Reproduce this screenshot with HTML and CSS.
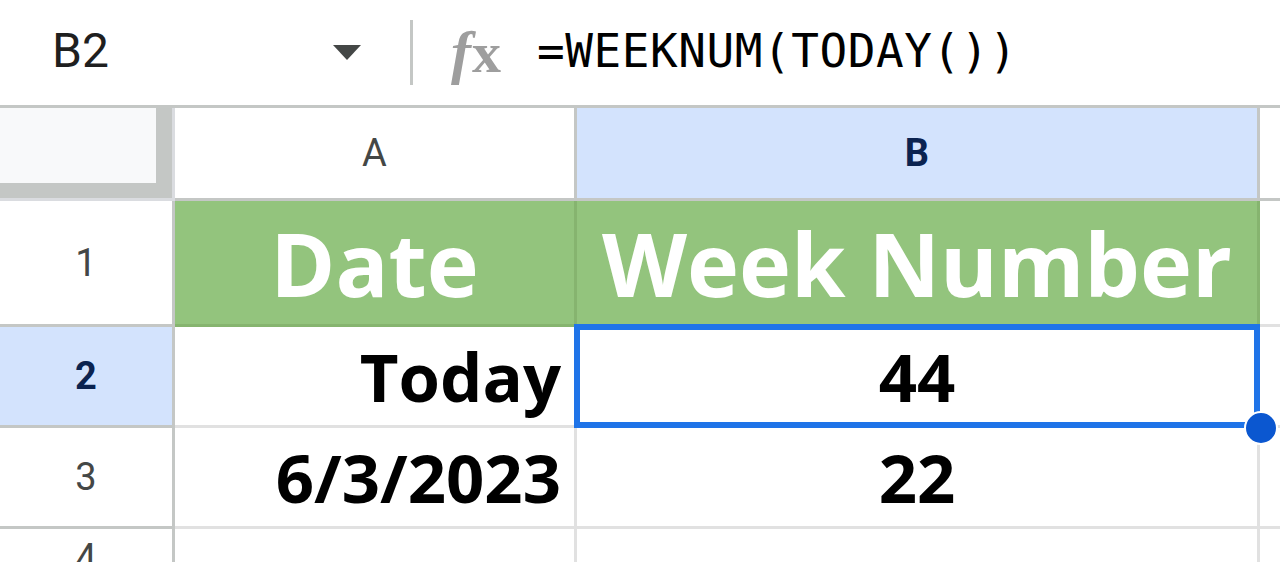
FILE: index.html
```html
<!DOCTYPE html>
<html lang="en">
<head>
    <meta charset="UTF-8">
    <meta name="viewport" content="width=device-width, initial-scale=1.0">
    <title>WEEKNUM</title>
    <link rel="stylesheet" href="styles.css">
</head>
<body>

<div class="formula-bar">
    <div class="name-box">
        <span class="cell-ref">B2</span>
        <span class="arrow"></span>
    </div>
    <div class="divider"></div>
    <div class="fx"><i>f</i><b>x</b></div>
    <div class="formula">=WEEKNUM(TODAY())</div>
</div>

<div class="sheet">
    <!-- column headers -->
    <div class="corner"><div class="corner-inner"></div></div>
    <div class="col-head">A</div>
    <div class="col-head active">B</div>
    <div class="col-head rest"></div>

    <!-- row 1 -->
    <div class="row-head row-1">1</div>
    <div class="cell title">Date</div>
    <div class="cell title">Week Number</div>
    <div class="cell rest"></div>

    <!-- row 2 -->
    <div class="row-head active">2</div>
    <div class="cell right">Today</div>
    <div class="cell center selected">
        44
        <div class="selection"></div>
        <div class="handle"></div>
    </div>
    <div class="cell rest"></div>

    <!-- row 3 -->
    <div class="row-head">3</div>
    <div class="cell right">6/3/2023</div>
    <div class="cell center">22</div>
    <div class="cell rest"></div>

    <!-- row 4 -->
    <div class="row-head">4</div>
    <div class="cell"></div>
    <div class="cell"></div>
    <div class="cell rest"></div>
</div>

</body>
</html>
```

FILE: styles.css
```css
body {
    margin: 0;
    background-color: white;
    font-family: Roboto, "Liberation Sans", sans-serif;
    overflow: hidden;
}

/* top formula bar */
.formula-bar {
    height: 105px;
    display: flex;
    align-items: center;
    border-bottom: 3px solid #c4c7c5;
}
.name-box {
    width: 361px;
    padding-left: 52px;
    box-sizing: border-box;
    display: flex;
    align-items: center;
    justify-content: space-between;
    margin-top: -4px;
}
.cell-ref {
    font-size: 48px;
    color: #1f1f1f;
}
.arrow {
    width: 0;
    height: 0;
    border-left: 14px solid transparent;
    border-right: 14px solid transparent;
    border-top: 15px solid #444746;
    margin-top: 4px;
}
.divider {
    width: 3px;
    height: 65px;
    background-color: #c4c7c5;
    margin-left: 49px;
}
.fx {
    margin-left: 38px;
    color: #9e9e9e;
    font-family: "Liberation Serif", serif;
    font-size: 60px;
    line-height: 1;
    margin-top: -2px;
}
.fx i {
    font-weight: bold;
}
.fx b {
    font-size: 58px;
    margin-left: 1px;
}
.formula {
    margin-left: 36px;
    font-family: "DejaVu Sans Mono", monospace;
    font-size: 46px;
    color: #000;
    letter-spacing: 0.55px;
    margin-top: -4px;
}

/* grid */
.sheet {
    display: grid;
    grid-template-columns: 175px 402px 683px 1fr;
    grid-template-rows: 93px 126px 101px 101px 60px;
}
.sheet > div {
    box-sizing: border-box;
    border-right: 3px solid #e1e1e1;
    border-bottom: 3px solid #e1e1e1;
}
.corner {
    background-color: #c4c7c5;
    border-right-color: #dadce0 !important;
    border-bottom-color: #dadce0 !important;
}
.corner-inner {
    width: 156px;
    height: 75px;
    background-color: #f8f9fa;
}
.col-head {
    display: flex;
    align-items: center;
    justify-content: center;
    font-size: 38px;
    color: #444746;
    border-right-color: #c4c7c5 !important;
    border-bottom-color: #c4c7c5 !important;
}
.col-head.active {
    background-color: #d3e3fd;
    color: #0b2350;
    font-weight: bold;
}
.col-head.rest {
    border-right: none !important;
}
.row-head {
    display: flex;
    align-items: center;
    justify-content: center;
    font-size: 38px;
    color: #444746;
    border-right-color: #c4c7c5 !important;
    border-bottom-color: #c4c7c5 !important;
}
.row-head.active {
    background-color: #d3e3fd;
    color: #0b2350;
    font-weight: bold;
}
.cell {
    display: flex;
    align-items: center;
    font-family: "Open Sans", "Noto Sans", sans-serif;
    font-weight: bold;
    font-size: 67px;
    color: #000;
}
.cell.rest {
    border-right: none;
}
.cell.title {
    background-color: #93c47d;
    color: white;
    justify-content: center;
    font-size: 88px;
    border-right-color: #86b46f;
    border-bottom-color: #86b46f;
}
.cell.right {
    justify-content: flex-end;
    padding-right: 13px;
}
.cell.center {
    justify-content: center;
}
.selected {
    position: relative;
}
.selection {
    position: absolute;
    top: -3px;
    left: -3px;
    right: -3px;
    bottom: -3px;
    border: 6px solid #1f74e8;
    box-shadow: inset 0 0 0 1px white;
}
.handle {
    position: absolute;
    right: -21px;
    bottom: -20px;
    width: 30px;
    height: 30px;
    border-radius: 50%;
    background-color: #0b57d0;
    border: 2px solid white;
}
```
